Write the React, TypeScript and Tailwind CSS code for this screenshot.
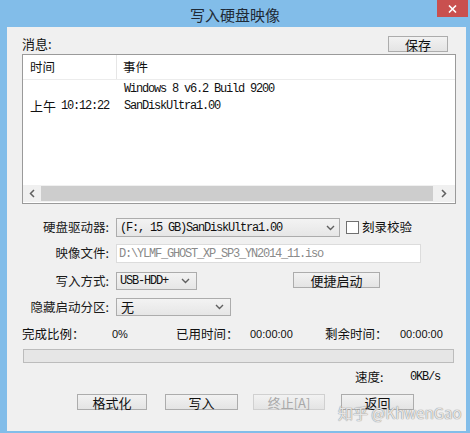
import React from "react";

const cjk = "font-['Noto_Sans_CJK_SC','Noto_Sans',sans-serif]";
const mono = "font-['Liberation_Mono','Noto_Sans_CJK_SC',monospace] text-[12px] tracking-[-1.2px]";

function Chevron({ className = "" }: { className?: string }) {
  return (
    <svg width="9" height="6" viewBox="0 0 9 6" className={className}>
      <polyline points="1,1 4.5,4.5 8,1" fill="none" stroke="#606060" strokeWidth="1.4" />
    </svg>
  );
}

function Btn({ children, w, disabled = false, className = "" }: { children: React.ReactNode; w: string; disabled?: boolean; className?: string }) {
  return (
    <div
      className={`${w} h-[16px] flex items-center justify-center border border-[#acacac] bg-gradient-to-b from-[#f2f2f2] to-[#e4e4e4] text-[13px] leading-none ${cjk} ${disabled ? "text-[#a8a8a8] border-[#d0d0d0]" : "text-[#111]"} ${className}`}
    >
      {children}
    </div>
  );
}

function Label({ children }: { children: React.ReactNode }) {
  return <div className={`w-[102px] text-right text-[12.5px] text-[#1a1a1a] ${cjk}`}>{children}</div>;
}

export default function App() {
  return (
    <div className="w-[470px] h-[433px] bg-[#82bde9] flex flex-col overflow-hidden">
      <div className="relative h-[27px] flex items-center justify-center">
        <span className={`text-[15px] text-[#1f2a36] ${cjk} mt-[4px]`}>写入硬盘映像</span>
        <div className="absolute top-0 right-[2px] w-[31px] h-[17px] bg-[#c9504f] flex items-center justify-center">
          <svg width="9" height="8" viewBox="0 0 9 8">
            <path d="M1 0.5 L8 7.5 M8 0.5 L1 7.5" stroke="#fff" strokeWidth="1.6" />
          </svg>
        </div>
      </div>
      <div className="relative ml-[7px] mr-[4px] h-[404px] bg-[#f0f0f0] flex flex-col">
        {/* message header */}
        <div className="mt-[9px] h-[16px] flex items-center">
          <span className={`ml-[15px] text-[13px] text-[#111] ${cjk}`}>消息:</span>
          <Btn w="w-[60px]" className="ml-auto mr-[18px]">保存</Btn>
        </div>
        {/* list box */}
        <div className="mt-[2px] ml-[15px] w-[434px] h-[150px] border border-[#9a9a9a] bg-white flex flex-col">
          <div className="h-[25px] flex border-b border-[#ececec]">
            <div className={`w-[94px] border-r border-[#e6e6e6] pl-[7px] flex items-center text-[12.5px] text-[#111] ${cjk}`}>时间</div>
            <div className={`pl-[6px] flex items-center text-[12.5px] text-[#111] ${cjk}`}>事件</div>
          </div>
          <div className="flex-1 flex flex-col pt-[1px] text-[#111]">
            <div className="h-[16px] flex items-center">
              <div className="w-[94px]" />
              <span className={`pl-[7px] ${mono}`}>Windows 8 v6.2 Build 9200</span>
            </div>
            <div className="h-[16px] mt-[1px] flex items-center">
              <div className="w-[94px] pl-[7px] flex items-center whitespace-nowrap">
                <span className={`${cjk} text-[13px]`}>上午</span>
                <span className={`${mono} ml-[5px]`}>10:12:22</span>
              </div>
              <span className={`pl-[7px] ${mono}`}>SanDiskUltra1.00</span>
            </div>
          </div>
          <div className="h-[17px] flex items-center bg-[#f0f0f0] mb-[1px]">
            <div className="w-[18px] flex justify-center">
              <svg width="6" height="9" viewBox="0 0 6 9"><polyline points="5,1 1.5,4.5 5,8" fill="none" stroke="#606060" strokeWidth="1.5" /></svg>
            </div>
            <div className="h-[15px] w-[392px] bg-[#cdcdcd]" />
            <div className="flex-1 flex justify-center">
              <svg width="6" height="9" viewBox="0 0 6 9"><polyline points="1,1 4.5,4.5 1,8" fill="none" stroke="#606060" strokeWidth="1.5" /></svg>
            </div>
          </div>
        </div>
        {/* drive row */}
        <div className="mt-[14px] h-[19px] flex items-center">
          <Label>硬盘驱动器:</Label>
          <div className="ml-[7px] w-[224px] h-[19px] border border-[#acacac] bg-gradient-to-b from-[#f3f3f3] to-[#e6e6e6] flex items-center pl-[3px] pr-[4px]">
            <span className={`${mono} text-[#111]`}>(F:, 15 GB)SanDiskUltra1.00</span>
            <Chevron className="ml-auto" />
          </div>
          <div className="ml-[6px] w-[13px] h-[13px] border border-[#707070] bg-white" />
          <span className={`ml-[3px] text-[12.5px] text-[#111] ${cjk}`}>刻录校验</span>
        </div>
        {/* image row */}
        <div className="mt-[7px] h-[19px] flex items-center">
          <Label>映像文件:</Label>
          <div className="ml-[7px] w-[305px] h-[19px] border border-[#dcdcdc] bg-white flex items-center pl-[2px]">
            <span className={`${mono} text-[#8a8a8a]`}>D:\YLMF_GHOST_XP_SP3_YN2014_11.iso</span>
          </div>
        </div>
        {/* write mode row */}
        <div className="mt-[9px] h-[18px] flex items-center">
          <Label>写入方式:</Label>
          <div className="ml-[7px] w-[81px] h-[18px] border border-[#acacac] bg-gradient-to-b from-[#f3f3f3] to-[#e6e6e6] flex items-center pl-[3px] pr-[6px]">
            <span className={`${mono} text-[#111]`}>USB-HDD+</span>
            <Chevron className="ml-auto" />
          </div>
          <Btn w="w-[87px]" className="ml-[96px] self-start">便捷启动</Btn>
        </div>
        {/* hidden partition row */}
        <div className="mt-[8px] h-[18px] flex items-center">
          <Label>隐藏启动分区:</Label>
          <div className="ml-[7px] w-[115px] h-[18px] border border-[#acacac] bg-gradient-to-b from-[#f3f3f3] to-[#e6e6e6] flex items-center pl-[4px] pr-[6px]">
            <span className={`text-[13px] text-[#111] ${cjk}`}>无</span>
            <Chevron className="ml-auto" />
          </div>
        </div>
        {/* progress labels */}
        <div className="mt-[11px] h-[14px] flex items-center text-[12.5px] text-[#111]">
          <span className={`ml-[15px] w-[90px] ${cjk}`}>完成比例：</span>
          <span className="w-[64px] font-['Liberation_Sans',sans-serif] text-[11px]">0%</span>
          <span className={`w-[74px] ${cjk}`}>已用时间：</span>
          <span className="w-[75px] font-['Liberation_Sans',sans-serif] text-[11px]">00:00:00</span>
          <span className={`w-[75px] ${cjk}`}>剩余时间：</span>
          <span className="font-['Liberation_Sans',sans-serif] text-[11px]">00:00:00</span>
        </div>
        {/* progress bar */}
        <div className="mt-[8px] ml-[16px] w-[431px] h-[14px] border border-[#bcbcbc] bg-[#e6e6e6]" />
        {/* speed */}
        <div className="mt-[7px] h-[14px] flex items-center text-[#111]">
          <span className={`ml-[348px] w-[55px] text-[12.5px] ${cjk}`}>速度:</span>
          <span className={mono}>0KB/s</span>
        </div>
        {/* buttons */}
        <div className="mt-[10px] flex">
          <Btn w="w-[70px]" className="ml-[70px]">格式化</Btn>
          <Btn w="w-[73px]" className="ml-[18px]">写入</Btn>
          <Btn w="w-[72px]" className="ml-[15px]" disabled>终止[A]</Btn>
          <Btn w="w-[73px]" className="ml-[16px]">返回</Btn>
        </div>
        <div
          className={`absolute left-[331px] top-[377px] whitespace-nowrap text-[15px] leading-[18px] text-[rgba(255,255,255,0.8)] ${cjk} [text-shadow:0_0_1px_#8a8a8a,0_0_1px_#8a8a8a]`}
        >
          知乎 @KhwenGao
        </div>
      </div>
      <div className="flex-1" />
    </div>
  );
}
